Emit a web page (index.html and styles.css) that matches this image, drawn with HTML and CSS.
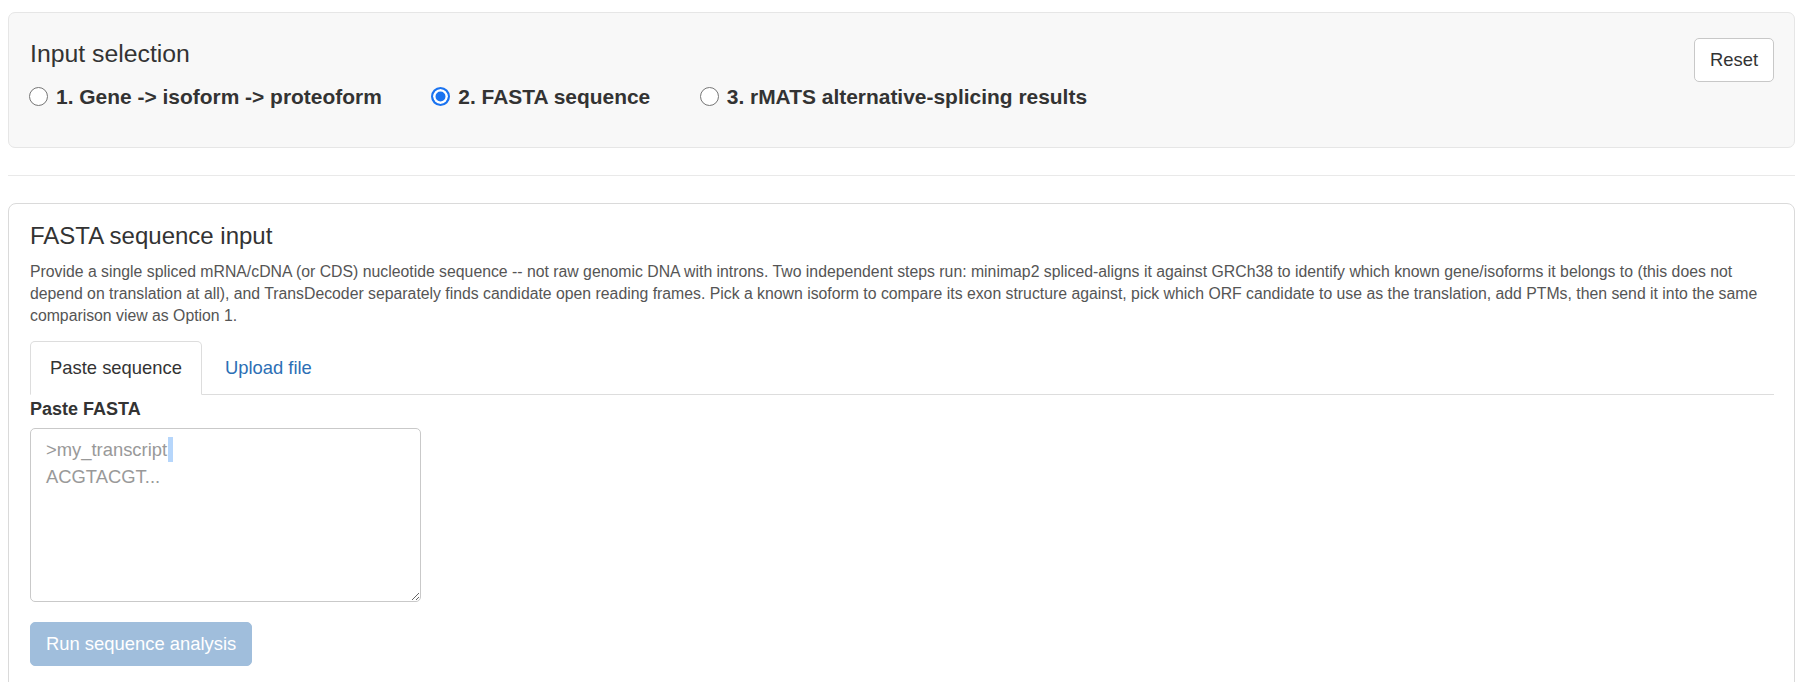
FILE: index.html
```html
<!DOCTYPE html>
<html lang="en">
<head>
<meta charset="utf-8">
<title>Input selection</title>
<link rel="stylesheet" href="styles.css">
</head>
<body>
<div class="page">
  <section class="well">
    <div class="well-main">
      <h4 class="title well-title">Input selection</h4>
      <div class="radio-row">
        <label class="opt"><span class="radio"></span><span class="opt-text">1. Gene -&gt; isoform -&gt; proteoform</span></label>
        <label class="opt"><span class="radio checked"></span><span class="opt-text">2. FASTA sequence</span></label>
        <label class="opt"><span class="radio"></span><span class="opt-text">3. rMATS alternative-splicing results</span></label>
      </div>
    </div>
    <button class="btn-reset" type="button">Reset</button>
  </section>

  <hr class="divider">

  <section class="card">
    <h4 class="title card-title">FASTA sequence input</h4>
    <p class="desc">Provide a single spliced mRNA/cDNA (or CDS) nucleotide sequence -- not raw genomic DNA with introns. Two independent steps run: minimap2 spliced-aligns it against GRCh38 to identify which known gene/isoforms it belongs to (this does not depend on translation at all), and TransDecoder separately finds candidate open reading frames. Pick a known isoform to compare its exon structure against, pick which ORF candidate to use as the translation, add PTMs, then send it into the same comparison view as Option 1.</p>
    <ul class="tabs">
      <li class="tab active">Paste sequence</li>
      <li class="tab link">Upload file</li>
    </ul>
    <div class="tab-pane">
      <div class="field-label">Paste FASTA</div>
      <div class="ta-wrap">
        <textarea class="ta" placeholder="&gt;my_transcript&#10;ACGTACGT..."></textarea>
        <span class="caret"></span>
      </div>
      <button class="btn-run" type="button">Run sequence analysis</button>
    </div>
  </section>
</div>
</body>
</html>
```

FILE: styles.css
```css
* { box-sizing: border-box; }

html, body {
  margin: 0;
  padding: 0;
  background: #fff;
  overflow: hidden;
}

body {
  font-family: "Liberation Sans", Arial, Helvetica, sans-serif;
  color: #333;
  font-size: 18.4px;
  line-height: 1.43;
}

.page {
  padding: 11.5px 13px 0 8px;
}

.well {
  display: flex;
  justify-content: space-between;
  align-items: flex-start;
  background: #f8f8f8;
  border: 1px solid #e6e6e6;
  border-radius: 7px;
  padding: 20px 20px 20px 21px;
}

.title {
  margin: 8px 0 0;
  font-size: 24px;
  font-weight: 400;
  line-height: 1.1;
  color: #333;
}

.well-title {
  font-size: 24.8px;
  line-height: 26.4px;
}

.radio-row {
  display: flex;
  align-items: center;
  height: 28px;
  margin: 16px 0 15.6px;
}

.opt {
  display: inline-flex;
  align-items: center;
  margin-right: 50.5px;
}

.radio {
  display: inline-block;
  width: 19px;
  height: 19px;
  border-radius: 50%;
  border: 1px solid #767676;
  background: #fff;
  margin: 0 8px 0 -1px;
  flex: none;
}

.radio.checked {
  border: 2px solid #1a73f0;
  background: #1a73f0;
  box-shadow: inset 0 0 0 2.5px #fff;
}

.opt-text {
  font-size: 20.95px;
  font-weight: 700;
  line-height: 28px;
  color: #333;
}

.btn-reset {
  margin-top: 5.5px;
  font-family: inherit;
  font-size: 18.4px;
  line-height: 26.3px;
  color: #333;
  background: #fff;
  border: 1px solid #c8c8c8;
  border-radius: 5px;
  padding: 7.8px 15px;
}

.divider {
  border: 0;
  border-top: 1px solid #e9e9e9;
  margin: 27px 0;
  height: 0;
}

.card {
  border: 1px solid #dadada;
  border-radius: 8px;
  padding: 20px 20px 40px 21px;
  background: #fff;
}

.card-title {
  margin: 0;
  line-height: 1;
}

.desc {
  margin: 13.2px 0 13.4px;
  font-size: 15.8px;
  line-height: 22.2px;
  color: #555;
}

.tabs {
  list-style: none;
  margin: 0;
  padding: 0;
  display: flex;
  border-bottom: 1px solid #dddddd;
}

.tab {
  padding: 13px 19px;
  font-size: 18.4px;
  line-height: 26.3px;
  border: 1px solid transparent;
  border-radius: 5px 5px 0 0;
  margin-bottom: -1px;
  margin-right: 3px;
}

.tab.active {
  color: #333;
  background: #fff;
  border-color: #dddddd #dddddd transparent;
}

.tab.link {
  color: #2c6fb5;
}

.tab-pane {
  padding-top: 2px;
}

.field-label {
  font-size: 18px;
  font-weight: 700;
  line-height: 24.3px;
  margin-bottom: 7px;
  color: #333;
}

.ta-wrap {
  position: relative;
  width: 391px;
}

.ta {
  display: block;
  width: 391px;
  height: 173.4px;
  padding: 8px 14px 8px 15px;
  border: 1px solid #c9c9c9;
  border-radius: 5px;
  font-family: inherit;
  font-size: 18.4px;
  line-height: 26.3px;
  color: #333;
  background: #fff;
  resize: both;
}

.ta::placeholder {
  color: #999;
  opacity: 1;
}

.caret {
  position: absolute;
  left: 138px;
  top: 8.7px;
  width: 4.7px;
  height: 25.3px;
  background: #b6d6fb;
}

.btn-run {
  display: block;
  margin-top: 20.6px;
  font-family: inherit;
  font-size: 18.4px;
  line-height: 26.3px;
  color: #fff;
  background: #a0bedc;
  border: 1px solid #a0bedc;
  border-radius: 5px;
  padding: 7.7px 15px;
}
```
